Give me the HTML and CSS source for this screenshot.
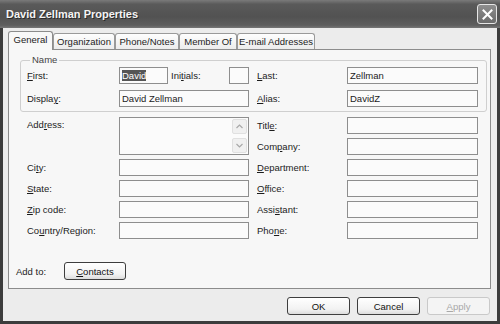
FILE: index.html
```html
<!DOCTYPE html>
<html lang="en">
<head>
    <meta charset="UTF-8">
    <title>David Zellman Properties</title>
    <link rel="stylesheet" href="styles.css">
</head>
<body>
    <div class="window">
        <div class="titlebar">
            <span class="title">David Zellman Properties</span>
            <div class="close">
                <svg width="11" height="11" viewBox="0 0 11 11"><path d="M1.5 1.5 L9.5 9.5 M9.5 1.5 L1.5 9.5" stroke="#fff" stroke-width="2" stroke-linecap="square"/></svg>
            </div>
        </div>

        <div class="body">
            <div class="tabs">
                <div class="tab active" style="width:45px">General</div>
                <div class="tab" style="width:62px">Organization</div>
                <div class="tab" style="width:64px">Phone/Notes</div>
                <div class="tab" style="width:58px">Member Of</div>
                <div class="tab" style="width:78px">E-mail Addresses</div>
            </div>

            <div class="panel">
                <fieldset class="group">
                    <legend>Name</legend>
                    <div class="name-grid">
                        <label><u>F</u>irst:</label>
                        <div class="field"><span class="selected">David</span></div>
                        <label class="initials">Ini<u>t</u>ials:</label>
                        <div class="field"></div>
                        <label class="right"><u>L</u>ast:</label>
                        <div class="field">Zellman</div>

                        <label>Displa<u>y</u>:</label>
                        <div class="field wide">David Zellman</div>
                        <label class="right"><u>A</u>lias:</label>
                        <div class="field">DavidZ</div>
                    </div>
                </fieldset>

                <div class="fields">
                    <label class="left top">Add<u>r</u>ess:</label>
                    <div class="field address">
                        <div class="scroll">
                            <span class="arrow"><svg width="7" height="5" viewBox="0 0 7 5"><path d="M0.5 4 L3.5 1 L6.5 4" fill="none" stroke="#a8a8a8" stroke-width="1.2"/></svg></span>
                            <span class="arrow"><svg width="7" height="5" viewBox="0 0 7 5"><path d="M0.5 1 L3.5 4 L6.5 1" fill="none" stroke="#a8a8a8" stroke-width="1.2"/></svg></span>
                        </div>
                    </div>
                    <label class="right">Titl<u>e</u>:</label>
                    <div class="field"></div>
                    <label class="right">Com<u>p</u>any:</label>
                    <div class="field"></div>

                    <label class="left">Ci<u>t</u>y:</label>
                    <div class="field"></div>
                    <label class="right"><u>D</u>epartment:</label>
                    <div class="field"></div>

                    <label class="left"><u>S</u>tate:</label>
                    <div class="field"></div>
                    <label class="right"><u>O</u>ffice:</label>
                    <div class="field"></div>

                    <label class="left"><u>Z</u>ip code:</label>
                    <div class="field"></div>
                    <label class="right">Assi<u>s</u>tant:</label>
                    <div class="field"></div>

                    <label class="left">Co<u>u</u>ntry/Region:</label>
                    <div class="field"></div>
                    <label class="right">Pho<u>n</u>e:</label>
                    <div class="field"></div>
                </div>

                <div class="addto">
                    <span>Add to:</span>
                    <button class="btn contacts"><u>C</u>ontacts</button>
                </div>
            </div>

            <div class="actions">
                <button class="btn">OK</button>
                <button class="btn">Cancel</button>
                <button class="btn disabled"><u>A</u>pply</button>
            </div>
        </div>
    </div>
</body>
</html>
```

FILE: styles.css
```css
* {
    box-sizing: border-box;
}
body {
    margin: 0;
    font-family: "Liberation Sans", Arial, sans-serif;
    font-size: 9.5px;
    color: #1c1c1c;
    background: #3a3a3a;
}
u {
    text-decoration: underline;
    text-underline-offset: 1px;
}
.window {
    width: 500px;
    height: 324px;
    display: flex;
    flex-direction: column;
    background: #3c3c3c;
}
.titlebar {
    height: 28px;
    flex: none;
    display: flex;
    align-items: center;
    justify-content: space-between;
    padding: 0 3px 0 6px;
    background: linear-gradient(#7a7a7a, #5a5a5a 15%, #525252 60%, #5e5e5e 90%, #777);
}
.title {
    color: #f4f4f4;
    font-weight: bold;
    font-size: 11px;
    text-shadow: 1px 1px 0 #2a2a2a;
}
.close {
    width: 20px;
    height: 20px;
    display: flex;
    align-items: center;
    justify-content: center;
    background: linear-gradient(#8e8e8e, #6c6c6c);
    border: 1px solid #e6e6e6;
    border-radius: 3px;
}
.body {
    flex: 1;
    margin: 0 3px 3px 3px;
    padding: 3px 6px 0 5px;
    background: #ececec;
}
.tabs {
    display: flex;
    align-items: flex-end;
    height: 18px;
    position: relative;
    z-index: 1;
}
.tab {
    height: 16px;
    line-height: 15px;
    text-align: center;
    white-space: nowrap;
    border: 1px solid #9a9a9a;
    border-bottom: none;
    border-radius: 3px 3px 0 0;
    background: linear-gradient(#fefefe, #ececec);
}
.tab.active {
    height: 19px;
    line-height: 16px;
    margin-bottom: -1px;
    background: #f8f8f8;
    border-color: #8c8c8c;
}
.panel {
    height: 240px;
    padding: 4px 3px 0 0;
    background: #f7f7f7;
    border: 1px solid #8c8c8c;
}
.group {
    margin: 0 0 0 11px;
    padding: 1px 0 4px 6px;
    border: 1px solid #cfcfcf;
    border-radius: 3px;
}
.group legend {
    margin-left: 3px;
    padding: 0 2px;
    line-height: 12px;
    color: #444;
}
.name-grid {
    display: grid;
    grid-template-columns: 92px 49px 61px 20px 98px 131px;
    grid-auto-rows: 17px;
    row-gap: 6px;
    align-items: center;
}
.name-grid .wide {
    grid-column: span 3;
}
.initials {
    padding-left: 3px;
}
.right {
    padding-left: 8px;
}
.field {
    height: 17px;
    line-height: 15px;
    padding: 0 2px;
    background: #fbfbfb;
    border: 1px solid #8e8e8e;
    white-space: nowrap;
    overflow: hidden;
}
.selected {
    background: #555;
    color: #fff;
}
.fields {
    margin: 5px 0 0 18px;
    display: grid;
    grid-template-columns: 92px 130px 98px 131px;
    grid-template-rows: repeat(6, 17px);
    row-gap: 4px;
    align-items: center;
}
.fields .left {
    grid-column: 1;
}
.fields .right {
    grid-column: 3;
}
.fields .top {
    align-self: start;
    padding-top: 2px;
}
.fields .address {
    grid-row: span 2;
    height: 38px;
    align-self: start;
    padding: 0;
    display: flex;
    justify-content: flex-end;
}
.scroll {
    width: 17px;
    display: flex;
    flex-direction: column;
    justify-content: space-between;
    padding: 1px;
}
.arrow {
    height: 15px;
    display: flex;
    align-items: center;
    justify-content: center;
    background: #f0f0f0;
    border: 1px solid #e0e0e0;
    border-radius: 2px;
}
.addto {
    margin: 23px 0 0 7px;
    display: flex;
    align-items: center;
}
.addto span {
    width: 48px;
}
.btn {
    height: 18px;
    padding: 0;
    font-family: inherit;
    font-size: 9.5px;
    color: #111;
    background: linear-gradient(#ffffff, #f2f2f2 70%, #dcdcdc);
    border: 1px solid #3e3e3e;
    border-radius: 3px;
}
.contacts {
    width: 62px;
}
.actions {
    display: flex;
    justify-content: flex-end;
    gap: 7px;
    margin-top: 8px;
    padding-right: 1px;
}
.actions .btn {
    width: 63px;
}
.btn.disabled {
    color: #a8a8a8;
    border-color: #c9c9c9;
    background: #f4f4f4;
}
```
